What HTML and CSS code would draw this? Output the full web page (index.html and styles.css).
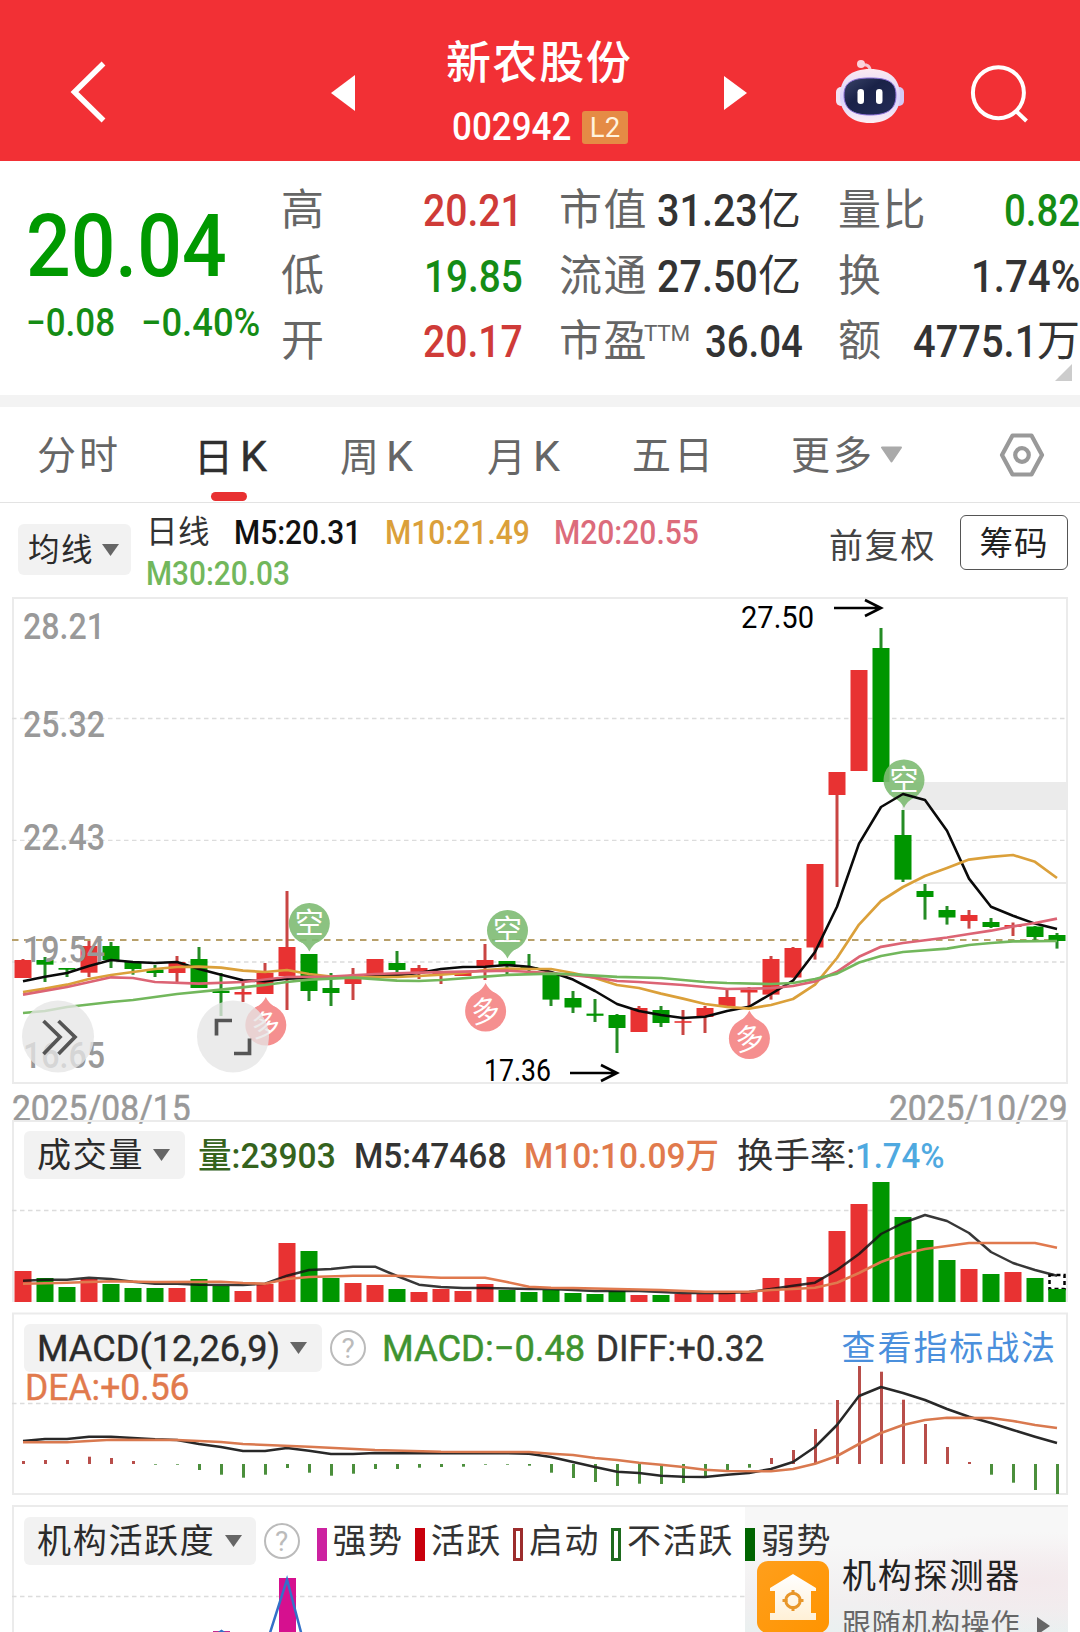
FILE: index.html
```html
<!DOCTYPE html>
<html lang="zh-CN">
<head>
<meta charset="utf-8">
<title>新农股份 002942</title>
<link rel="stylesheet" href="styles.css">
</head>
<body>
<header class="topbar">
  <svg class="back" width="36" height="62" viewBox="70 60 36 62"><path d="M103.500 62.500L74.500 91L103.500 119.500" fill="none" stroke="#fff" stroke-width="5.500"/></svg>
  <svg class="prev" width="24" height="36" viewBox="0 0 24 36"><path d="M0 18L24 0V36Z" fill="#fff"/></svg>
  <div class="stock">
    <div class="stock-name">新农股份</div>
    <div class="stock-code"><span class="fit" data-w="119">002942</span><span class="badge">L2</span></div>
  </div>
  <svg class="next" width="23" height="34" viewBox="0 0 23 34"><path d="M23 17L0 0V34Z" fill="#fff"/></svg>
  <svg class="robot" width="70" height="66" viewBox="835 58 70 66">
    <defs>
      <linearGradient id="shell" x1="0" y1="0" x2="0" y2="1"><stop offset="0" stop-color="#fbe9f1"/><stop offset=".55" stop-color="#d9d3fb"/><stop offset="1" stop-color="#fdeef4"/></linearGradient>
      <linearGradient id="visor" x1="0" y1="0" x2="1" y2="1"><stop offset="0" stop-color="#3a4468"/><stop offset=".4" stop-color="#1a2248"/><stop offset="1" stop-color="#232c56"/></linearGradient>
    </defs>
    <path d="M861 64Q870 62 870.500 71" fill="none" stroke="#f6c6d2" stroke-width="3"/>
    <circle cx="861" cy="63" r="4" fill="#fbd3dc"/>
    <rect x="836" y="86" width="10" height="19" rx="5" fill="#f3e2f3"/>
    <rect x="894" y="86" width="10" height="19" rx="5" fill="#d4c9f5"/>
    <path d="M870 68C889 68 900 77 900 95C900 112 888 122 870 122C852 122 840 112 840 95C840 77 851 68 870 68Z" fill="url(#shell)"/>
    <path d="M870 77C888 77 896 81 896 94C896 108 888 114 870 114C853 114 844 108 844 94C844 81 853 77 870 77Z" fill="url(#visor)" stroke="#8b6fd8" stroke-width="1"/>
    <rect x="857.500" y="88" width="6.500" height="15" rx="3.200" fill="#fff"/><rect x="876" y="88" width="6.500" height="15" rx="3.200" fill="#fff"/>
  </svg>
  <svg class="search" width="60" height="60" viewBox="968 63 60 60" fill="none" stroke="#fff" stroke-width="4"><circle cx="997.400" cy="91.700" r="25.500"/><path d="M1015 110L1025.500 120"/></svg>
</header>

<section class="quote">
  <div class="last">
    <div class="price"><span class="fit" data-w="201">20.04</span></div>
    <div class="change"><span class="fit" data-w="89">−0.08</span><span class="fit" data-w="119">−0.40%</span></div>
  </div>
  <dl class="col col-a">
    <div><dt>高</dt><dd class="up"><span class="fit" data-w="100">20.21</span></dd></div>
    <div><dt>低</dt><dd class="down"><span class="fit" data-w="99">19.85</span></dd></div>
    <div><dt>开</dt><dd class="up"><span class="fit" data-w="100">20.17</span></dd></div>
  </dl>
  <dl class="col col-b">
    <div><dt>市值</dt><dd><span class="fit" data-w="101">31.23</span><i>亿</i></dd></div>
    <div><dt>流通</dt><dd><span class="fit" data-w="101">27.50</span><i>亿</i></dd></div>
    <div><dt>市盈<sup>TTM</sup></dt><dd><span class="fit pe" data-w="98">36.04</span></dd></div>
  </dl>
  <dl class="col col-c">
    <div><dt>量比</dt><dd class="down"><span class="fit" data-w="76">0.82</span></dd></div>
    <div><dt>换</dt><dd><span class="fit" data-w="109">1.74%</span></dd></div>
    <div><dt>额</dt><dd><span class="fit" data-w="124">4775.1</span><i>万</i></dd></div>
  </dl>
  <span class="expand"></span>
</section>

<nav class="tabs">
  <span class="tab t1">分时</span>
  <span class="tab t2 active">日<b>K</b></span>
  <span class="tab t3">周<b>K</b></span>
  <span class="tab t4">月<b>K</b></span>
  <span class="tab t5">五日</span>
  <span class="tab t6">更多</span>
  <svg class="more" width="21" height="17" viewBox="0 0 21 17"><path d="M1 1.500H20L10.500 15.500Z" fill="#aaa" stroke="#aaa" stroke-width="2" stroke-linejoin="round"/></svg>
  <svg class="gear" width="46" height="44" viewBox="0 0 46 44" fill="none" stroke="#999"><path d="M13.500 2.500H32.500L43 22L32.500 41.500H13.500L3 22Z" stroke-width="4.200" stroke-linejoin="round"/><circle cx="23" cy="22" r="6.800" stroke-width="4.200"/></svg>
</nav>

<section class="ma">
  <span class="chip chip-ma"><em>均线</em><svg width="17" height="12" viewBox="0 0 17 12"><path d="M0 0H17L8.500 12Z"/></svg></span>
  <div class="ma-list">
    <span class="cjk">日线</span><span class="fit c5" data-w="127">M5:20.31</span><span class="fit c10" data-w="145">M10:21.49</span><span class="fit c20" data-w="145">M20:20.55</span><span class="fit c30" data-w="144">M30:20.03</span>
  </div>
  <span class="adjust">前复权</span>
  <span class="chips-btn">筹码</span>
</section>

<svg class="chart" id="kline" width="1080" height="487" viewBox="0 597 1080 487"></svg>
<div class="dates"><span class="fit" data-w="179">2025/08/15</span><span class="fit" data-w="179">2025/10/29</span></div>

<section class="panel panel-vol">
  <svg class="plot" id="vol" width="1080" height="182" viewBox="0 1120 1080 182"></svg>
  <div class="legend">
    <span class="chip"><em>成交量</em><svg width="17" height="12" viewBox="0 0 17 12"><path d="M0 0H17L8.500 12Z"/></svg></span>
    <div class="vals">
      <span class="fit vol" data-w="138">量:23903</span><span class="fit" data-w="152">M5:47468</span><span class="fit orange" data-w="195">M10:10.09万</span><span class="turn"><span class="fit thin" data-w="118">换手率:</span><span class="fit blue" data-w="90">1.74%</span></span>
    </div>
  </div>
</section>

<section class="panel panel-macd">
  <svg class="plot" id="macd" width="1080" height="183" viewBox="0 1312 1080 183"></svg>
  <div class="legend">
    <span class="chip"><span class="fit" data-w="243">MACD(12,26,9)</span><svg width="17" height="12" viewBox="0 0 17 12"><path d="M0 0H17L8.500 12Z"/></svg></span>
    <span class="help">?</span>
    <span class="fit macd-val" data-w="203">MACD:−0.48</span><span class="fit diff-val" data-w="168">DIFF:+0.32</span>
    <span class="link">查看指标战法</span>
  </div>
  <div class="dea"><span class="fit orange" data-w="165">DEA:+0.56</span></div>
</section>

<section class="panel panel-inst">
  <svg class="plot" id="inst" width="1080" height="127" viewBox="0 1505 1080 127"></svg>
  <aside class="promo">
    <svg width="72" height="72" viewBox="0 0 72 72">
      <defs><linearGradient id="or" x1="0" y1="0" x2="1" y2="1"><stop offset="0" stop-color="#ff9f1c"/><stop offset="1" stop-color="#ff9400"/></linearGradient>
      <linearGradient id="hs" x1="0" y1="0" x2="0" y2="1"><stop offset="0" stop-color="#fff"/><stop offset="1" stop-color="#fff0d6"/></linearGradient></defs>
      <rect width="72" height="72" rx="11" fill="url(#or)"/>
      <path d="M36 13L59 27V30H54V52H59V59H13V52H18V30H13V27Z" fill="url(#hs)"/>
      <circle cx="36" cy="39.500" r="7.200" fill="none" stroke="#e8962a" stroke-width="3"/><path d="M36 29V34M36 45V50M25.500 39.500H30.500M41.500 39.500H46.500" stroke="#e8962a" stroke-width="3"/>
    </svg>
    <div class="promo-text"><div class="promo-title">机构探测器</div><div class="promo-sub">跟随机构操作<svg width="13" height="18" viewBox="0 0 13 18"><path d="M0 0L13 9L0 18Z" fill="#666"/></svg></div></div>
  </aside>
  <div class="legend">
    <span class="chip"><em>机构活跃度</em><svg width="17" height="12" viewBox="0 0 17 12"><path d="M0 0H17L8.500 12Z"/></svg></span>
    <span class="help">?</span>
    <ul class="keys">
      <li><i class="k1"></i>强势</li><li><i class="k2"></i>活跃</li><li><i class="k3"></i>启动</li><li><i class="k4"></i>不活跃</li><li><i class="k5"></i>弱势</li>
    </ul>
  </div>
</section>
<script src="charts.js"></script>
</body>
</html>
```
FILE: styles.css
```css
* { box-sizing: border-box; margin: 0; padding: 0; }
html, body { width: 1080px; height: 1632px; overflow: hidden; background: #fff; }
body { font-family: Roboto, "Noto Sans CJK SC", sans-serif; color: #333; }
i, em { font-style: normal; }
svg { display: block; flex: none; }
.fit { display: inline-block; white-space: nowrap; flex: none; text-align: left; }
.fit > span { display: inline-block; transform-origin: 0 50%; }

/* title bar */
.topbar { display: flex; align-items: center; height: 161px; padding-top: 22px; background: #f23035; color: #fff; }
.back { margin-left: 70px; }
.prev { margin: 3px 0 0 225px; }
.stock { align-self: stretch; width: 200px; margin-left: 84px; padding-top: 16px; }
.stock-name { font-size: 45px; font-weight: 500; line-height: 52px; letter-spacing: 1.600px; padding-left: 7px; white-space: nowrap; }
.stock-code { display: flex; align-items: center; height: 34px; margin-top: 20px; padding-left: 13px; font-size: 38.500px; font-weight: 500; line-height: 38px; }
.badge { width: 46px; height: 33px; margin-left: 11px; border-radius: 3px; background: #e58b45; color: #fff3df; font-size: 27.500px; font-weight: 400; line-height: 33px; text-align: center; }
.next { margin: 3px 0 0 85px; }
.robot { margin-left: 88px; }
.search { margin: 5px 0 0 64px; }

/* quote */
.quote { position: relative; display: flex; height: 234px; }
.last { width: 256px; margin-left: 26px; padding-top: 39px; color: #009900; }
.price { font-size: 88px; line-height: 92px; height: 90px; font-weight: 500; }
.change { display: flex; justify-content: space-between; width: 234px; margin-top: 13px; font-size: 38.500px; line-height: 40px; font-weight: 500; color: #158c15; }
.col { padding-top: 17px; }
.col > div { display: flex; justify-content: space-between; height: 65.600px; line-height: 65.600px; white-space: nowrap; }
.col-a { width: 242px; margin-right: 36px; margin-left: -1px; }
.col-b { width: 242px; margin-right: 37px; }
.col-c { width: 242px; }
.col dt { font-size: 43px; letter-spacing: 1.500px; color: #666; }
.col dd { display: flex; font-size: 45px; font-weight: 500; color: #333; }
.col dd i { font-size: 43px; font-weight: 400; }
.col dd .pe { margin-right: -2px; }
.col .up { color: #cf3b38; }
.col .down { color: #158c15; }
.col sup { position: relative; top: -15px; margin-left: -4px; font-size: 22.500px; line-height: 1px; letter-spacing: -.300px; vertical-align: baseline; }
.expand { position: absolute; right: 8px; bottom: 14px; border-left: 17px solid transparent; border-bottom: 17px solid #ccc; }

/* period tabs */
.tabs { display: flex; align-items: center; height: 108px; border-top: 12px solid #f3f3f3; border-bottom: 1px solid #e3e3e3; color: #666; }
.tab { position: relative; height: 95px; width: 84px; font-size: 39px; line-height: 98px; letter-spacing: 3px; white-space: nowrap; }
.tab b { margin-left: 4px; font-size: 43px; font-weight: 400; }
.tab.active { color: #2f2f2f; -webkit-text-stroke: .400px #2f2f2f; }
.tab.active::after { content: ""; position: absolute; left: 17px; bottom: 1px; width: 36px; height: 9px; border-radius: 5px; background: #e83031; }
.t1 { margin-left: 37px; }
.t2 { margin-left: 73px; }
.t3 { margin-left: 62px; }
.t4 { margin-left: 63px; }
.t5 { margin-left: 61px; }
.t6 { margin-left: 75px; }
.more { margin: -1px 0 0 6px; }
.gear { margin: 0 0 0 97px; }

/* moving averages */
.ma { display: flex; height: 94px; }
.chip { display: flex; align-items: center; height: 48px; padding: 0 14px 0 13px; border-radius: 6px; background: #f2f2f2; font-size: 34px; letter-spacing: 1.700px; color: #2b2b2b; white-space: nowrap; flex: none; }
.chip em, .keys li, .link { height: 48px; line-height: 49px; }
.chip svg { margin-left: 9px; fill: #666; }
.chip-ma { width: 113px; height: 51px; margin: 21px 0 0 18px; padding: 0 0 0 10px; font-size: 31.500px; letter-spacing: 1.500px; }
.chip-ma svg { margin-left: 8px; }
.ma-list { display: flex; flex-wrap: wrap; column-gap: 24px; align-content: flex-start; width: 600px; margin: 10px 0 0 15px; font-size: 32.500px; line-height: 40.500px; font-weight: 500; }
.ma-list .cjk { width: 64px; font-size: 31.500px; font-weight: 400; letter-spacing: .500px; }
.c5 { color: #111; }
.c10 { color: #dba03a; }
.c20 { color: #dc6b7b; }
.c30 { color: #72b75c; }
.adjust { width: 130px; margin-left: 83px; font-size: 34px; letter-spacing: 1.800px; line-height: 87px; color: #444; }
.chips-btn { width: 108px; height: 55px; margin-top: 12px; margin-left: 1px; border: 1px solid #555; border-radius: 6px; font-size: 33.500px; line-height: 56px; text-align: center; letter-spacing: 1px; color: #222; }

.chart { overflow: visible; }
.dates { display: flex; justify-content: space-between; height: 36px; padding: 6px 12px 0; font-size: 36px; line-height: 39px; color: #999; -webkit-text-stroke: .500px #999; }

/* indicator panels */
.panel { position: relative; }
.plot { position: absolute; left: 0; top: 0; }
.panel-vol { height: 182px; margin-bottom: 10px; }
.panel-macd { height: 183px; margin-bottom: 10px; }
.panel-inst { height: 127px; overflow: hidden; }
.legend { position: relative; display: flex; align-items: center; padding: 12px 12px 0 24px; white-space: nowrap; }
.panel-vol .legend { padding-top: 11px; }
.panel-vol .chip { width: 161px; }
.vals { display: flex; gap: 18px; height: 48px; margin-left: 13px; font-size: 35.500px; line-height: 50px; font-weight: 500; }
.turn { display: flex; }
.thin { font-weight: 400; }
.vol { color: #35631d; }
.orange { color: #e17a4d; }
.blue { color: #4fa9e0; }
.panel-macd .chip { width: 298px; font-size: 37px; letter-spacing: 0; -webkit-text-stroke: .400px #2b2b2b; }
.panel-macd .chip svg { margin-left: 10px; }
.help { width: 36px; height: 36px; margin-left: 8px; border: 2px solid #bbb; border-radius: 50%; font-size: 28px; line-height: 33px; text-align: center; color: #bbb; flex: none; }
.macd-val { margin-left: 16px; font-size: 37px; color: #3f9330; -webkit-text-stroke: .500px #3f9330; }
.diff-val { margin-left: 11px; font-size: 37px; -webkit-text-stroke: .400px #333; }
.link { margin: 0 11px 0 auto; font-size: 34px; letter-spacing: 1.900px; color: #4a8fdc; }
.dea { position: relative; padding-left: 25px; font-size: 37px; line-height: 32px; -webkit-text-stroke: .400px #e17a4d; }
.keys { display: flex; gap: 11px; margin-left: 17px; list-style: none; font-size: 34px; letter-spacing: 1.600px; }
.keys li { display: flex; }
.keys i { width: 10px; height: 33px; margin: 11px 6px 0 0; }
.k1 { background: #cc22a0; }
.k2 { background: #c8000c; }
.k3 { border: 3px solid #9c2d2d; }
.k4 { border: 3px solid #1e6b1e; }
.k5 { background: #006400; }
.promo { position: absolute; right: 12px; top: 0; width: 323px; height: 127px; display: flex; padding: 56px 0 0 12px; border-top: 2px solid #ebebeb; background: radial-gradient(ellipse 190px 50px at 90% 60%, #f3e9ec, rgba(243,233,236,0)), linear-gradient(#f7f7f7 30%, #f1eff0 75%, #eaf0f0); }
.promo svg { margin-top: -2px; }
.promo-text { margin-left: 13px; white-space: nowrap; }
.promo-title { margin-top: -4px; font-size: 34px; letter-spacing: 1.800px; line-height: 34px; color: #222; }
.promo-sub { display: flex; align-items: center; margin-top: 15px; font-size: 29px; letter-spacing: .700px; line-height: 34px; color: #666; }
.promo-sub svg { margin: 2px 0 0 17px; }
```
FILE: charts.js
```js
// Condenses each figure to the width of its slot.
document.querySelectorAll('.fit').forEach(function (el) {
  var inner = document.createElement('span');
  inner.textContent = el.textContent;
  el.textContent = '';
  el.appendChild(inner);
  el.style.width = el.dataset.w + 'px';
  inner.style.transform = 'scaleX(' + el.dataset.w / inner.offsetWidth + ')';
});

var RED = '#e83232', GREEN = '#009600';
function X(i) { return 23 + 22 * i; }
function rect(x, y, w, h, f, extra) { return '<rect x="' + x + '" y="' + y + '" width="' + w + '" height="' + h + '" fill="' + f + '" ' + (extra || '') + '/>'; }
function seg(x1, y1, x2, y2, c, w, dash) { return '<path d="M' + x1 + ' ' + y1 + 'L' + x2 + ' ' + y2 + '" stroke="' + c + '" stroke-width="' + w + '"' + (dash ? ' stroke-dasharray="' + dash + '"' : '') + ' fill="none"/>'; }
// pts is a flat list of index, y
function line(pts, c, w) {
  var s = '';
  for (var i = 0; i < pts.length; i += 2) s += X(pts[i]) + ',' + pts[i + 1] + ' ';
  return '<polyline points="' + s + '" fill="none" stroke="' + c + '" stroke-width="' + w + '" stroke-linejoin="round"/>';
}
function txt(x, y, t, size, fill, w, extra) { return '<text x="' + x + '" y="' + y + '" font-size="' + size + '" fill="' + fill + '"' + (w ? ' textLength="' + w + '" lengthAdjust="spacingAndGlyphs"' : '') + ' ' + (extra || '') + '>' + t + '</text>'; }
function grid(y, x2) { return seg(12, y, x2 || 1066, y, '#dcdcdc', 1.3, '4.5 3.5'); }

// colour, body top, body bottom, high, low
var K = [
['R',960,978,959,978],['G',960,964.7,957,982],['G',968,969.7,968,977],['R',946,972.7,941,977],['G',946,960,942,968],['G',962,969,962,974.7],
['G',969.5,973,965,977],['R',962,973,956,982],['G',959,988,947,988],['G',990.7,993,973,1016],['R',992,994.5,982,1002],['R',972.7,994,963,994],
['R',947,976,891,1010],['G',954,991,954,1001],['G',988,993,973,1006],['R',979,984,968,1000],['R',959,974,959,974],['G',963,970,951,975],
['R',968,973,965,979],['R',973,975,973,984],['R',972,976,972,976],['R',960,966,944,980],['G',961,965,961,975],['G',967,969.5,954,975],
['G',973.6,999.6,973,1006],['G',998,1007.5,991,1013],['G',1013.6,1015.8,999,1022],['G',1015,1028,1014,1053],['R',1008,1032,1006,1032],['G',1010,1023,1006,1027],
['R',1021.2,1022.8,1010,1035],['R',1008,1017,1006,1033],['R',997,1006.5,989.6,1006.5],['R',990,992.5,987,1007],['R',959,994.6,956,999.6],['R',948,977.5,947,977.5],
['R',864,947.5,864,959.6],['R',772,795,772,887],['R',670,771,670,771],['G',648,782,628,782],['G',835,879.6,810,882],['G',891,897,884,919.6],
['G',910,917.5,906,924.6],['R',915,921,910,928.6],['G',922,927,918,928],['R',925,927,922.5,936],['G',926.5,937,926,940],['G',935,941,933,948.6]];

function pin(x, y, green) {
  var c = green ? '#7fbc74' : '#f58383', t = green ? y + 28 : y - 28, s = green ? 1 : -1;
  return '<g opacity=".9"><path d="M' + (x - 11) + ' ' + (y + s * 17) + 'Q' + (x - 3) + ' ' + (y + s * 21) + ' ' + x + ' ' + t + 'Q' + (x + 3) + ' ' + (y + s * 21) + ' ' + (x + 11) + ' ' + (y + s * 17) + 'Z" fill="' + c + '"/><circle cx="' + x + '" cy="' + y + '" r="20.5" fill="' + c + '"/>' +
    txt(x, y + 10.5, green ? '空' : '多', 29, '#fff', 0, 'text-anchor="middle"' + (green ? '' : ' transform="rotate(-10 ' + x + ' ' + y + ')"')) + '</g>';
}

var s = rect(902, 782, 166, 28, '#ebebeb') + seg(915, 883, 1068, 883, '#e3e3e3', 1.5);
s += '<rect x="13" y="598" width="1054" height="485" fill="none" stroke="#ebebeb" stroke-width="2"/>';
s += grid(718.5) + grid(840.4) + grid(962) + seg(12, 940, 1066, 940, '#b8a06a', 1.8, '6.5 5.5');
K.forEach(function (k, i) {
  var c = k[0] === 'R' ? RED : GREEN;
  s += rect(X(i) - 1.5, k[3], 3, k[4] - k[3], k[0] === 'R' ? '#c94543' : '#258c25') + rect(X(i) - 8.5, k[1], 17, k[2] - k[1], c);
});
s += pin(309.3, 923.5, 1) + pin(507.5, 930.5, 1) + pin(904, 780, 1) + pin(265.8, 1025, 0) + pin(485.6, 1011, 0) + pin(749.4, 1038.6, 0);
s += line([0,981.3,1,976.7,2,973,3,966,4,960,5,962,6,963,7,962,8,969,9,974.7,10,980.3,11,981.3,12,978.7,13,977.7,14,977,15,976,16,974.7,17,975.3,18,973,19,969,20,967,21,966.7,22,965,23,966.7,24,972,25,979.6,26,991,27,1004,28,1011,29,1015,30,1018,31,1016.8,32,1011,33,1006.8,34,994,35,980.7,36,952,37,906.8,38,843.6,39,807,40,794,41,800,42,830.7,43,878.6,44,906.8,45,915.7,46,923.6,47,929], '#0a0a0a', 2.6);
s += line([0,992,1,988.7,2,984.7,3,979,4,975,5,972,6,969,7,967,8,966.7,9,967.7,10,970.7,11,972,12,970,13,974,14,976.7,16,977,17,977,18,976,19,974.7,20,973,21,970,22,968.7,23,969,24,969,25,973,26,978,27,985,28,988,29,993.6,30,998.6,31,1004,32,1006.8,33,1008.6,34,1005,35,999,36,984.6,37,958,38,924.6,39,901,40,887,41,876,42,868,43,859.6,44,856.8,45,855,46,861.8,47,878], '#dba03a', 2.7);
s += line([0,994.7,2,987,4,977.3,5,978,6,982,8,983.7,10,982,12,977,14,976.7,16,974,18,972.7,20,971.7,22,970.7,24,973,26,977.5,27,981,28,982,30,985,32,989,34,988.2,35,986,36,981.4,37,971.8,38,956.8,39,946.8,40,943,42,937.5,43,934,44,930.7,45,926.4,46,923,47,918.6], '#dc6474', 2.7);
s += line([0,1013,1,1011,2,1007,4,1002,5,1000,7,994,9,989.7,11,985,12,982,13,979.7,15,977.7,17,980.7,18,981,19,980,21,976.7,22,975,24,973.6,25,974.3,27,976.8,29,978,31,982,32,983,34,984,35,983,36,979,37,973.6,38,962.5,39,956,40,952,42,948.6,43,945,44,943,45,941.4,47,941], '#72b75c', 2.7);
[['28.21', 639], ['25.32', 736.5], ['22.43', 849.5], ['19.54', 962], ['16.65', 1067.5]].forEach(function (l) { s += txt(23, l[1], l[0], 36, '#999', 82, 'font-weight="500"'); });
s += txt(741, 628, '27.50', 31.5, '#000', 73) + txt(484, 1081, '17.36', 31.5, '#000', 67);
s += '<path d="M834 608H881M865 600L881 608L865 616M570 1073H617M601 1065L617 1073L601 1081" fill="none" stroke="#000" stroke-width="2.6"/>';
s += '<circle cx="58" cy="1036.500" r="36" fill="#e6e6e6" fill-opacity=".78"/><circle cx="233" cy="1036.500" r="36" fill="#e6e6e6" fill-opacity=".78"/>';
s += '<path d="M43.500 1021L60 1037L43.500 1054M58.500 1021L75 1037L58.500 1054M232 1020.500H216.500V1035.500M234 1053.500H249.500V1038.500" fill="none" stroke="#555" stroke-width="3.700"/>';
document.getElementById('kline').innerHTML = s;

// volume bar tops, same order as the candles
var V = [1271,1278,1287,1279,1284,1288,1288,1288,1279,1286,1291,1284,1243,1251,1278,1283,1285,1289,1292,1289,1291,1284,1290,1292,1290,1293,1294,1291,1295,1295,1294,1294,1293,1292,1278,1278,1277,1231,1204,1182,1217,1240,1260,1269,1274,1272,1278,1289];
s = '<path d="M13 1302V1121H1067V1302" fill="none" stroke="#ebebeb" stroke-width="2"/>' + grid(1210.5) + seg(12, 1301, 1068, 1301, '#ededed', 1);
V.forEach(function (y, i) { s += rect(X(i) - 8.5, y, 17, 1302 - y, K[i][0] === 'R' ? RED : GREEN); });
s += rect(1049.5, 1275, 15, 14, '#fff', 'stroke="#000" stroke-width="2.5" stroke-dasharray="4 3"');
s += rect(1048.5, 1289, 17, 13, GREEN);
s += line([0,1280.7,1,1279.7,2,1279.7,3,1277.7,4,1279,5,1281.7,6,1283.7,7,1283.7,8,1284.7,10,1285,11,1283.7,12,1275.7,13,1270,14,1269,15,1266.7,16,1266.7,17,1276,18,1284.7,19,1287,20,1288,21,1288,23,1289,24,1289,25,1290,26,1291,28,1291,30,1293,32,1293,33,1292,34,1289,35,1285.7,36,1282.7,37,1270,38,1254,39,1234,40,1223,41,1215,42,1221,43,1233,44,1252,45,1263,46,1270,47,1275.7], 'rgba(20,20,20,.85)', 2.5);
s += line([0,1283.7,2,1282.7,4,1281.3,6,1282,9,1281.7,10,1283,11,1283.7,12,1279,13,1277,15,1275.7,17,1275.7,19,1277.7,21,1277.7,22,1282,23,1286.7,24,1287.7,25,1288,29,1290,31,1291.7,33,1291.7,34,1290,35,1289,36,1287.7,37,1282.7,38,1273,39,1262,40,1254,41,1249,42,1246,43,1243,46,1243,47,1247.7], '#e0794e', 2.6);
document.getElementById('vol').innerHTML = s;

// MACD histogram ends
var M = [1461,1460,1460,1456.7,1458,1461,1464.7,1464.7,1470,1474.7,1477.7,1474.7,1468,1472.7,1475.7,1473.7,1469,1469,1467.7,1467,1466.7,1464.7,1464.7,1465.7,1472.7,1478,1482,1486,1483.7,1484,1483,1477.7,1472,1467.7,1458,1450,1429,1400,1366,1371.7,1399.7,1424,1447,1462,1474.7,1482.7,1490,1494];
s = '<rect x="13" y="1313.500" width="1054" height="180.500" fill="none" stroke="#ebebeb" stroke-width="2"/>' + grid(1403.5);
M.forEach(function (y, i) { s += y < 1464 ? rect(X(i) - 1, y, 3, 1464 - y, '#b84e4a') : rect(X(i) - 1, 1464, 3, y - 1464, '#4b8f3c'); });
s += line([0,1441,1,1439,2,1439,3,1436.7,4,1436.7,5,1438,6,1439.3,7,1440,8,1444,9,1447,10,1451,11,1451,12,1448,13,1450.7,14,1454,15,1454,16,1453,22,1453.3,23,1453.7,24,1457,25,1462,26,1467,27,1471.7,28,1473,29,1475.7,30,1476.7,31,1477,32,1474.7,33,1473,34,1469,35,1462,36,1447,37,1425,38,1396,39,1387,40,1393,41,1400,42,1409,43,1416.7,44,1423,45,1430,46,1436.7,47,1443], '#282828', 2.5);
s += line([0,1442.3,2,1442.3,4,1439.7,7,1440,9,1442,10,1444,13,1446.7,16,1450,19,1451.7,23,1452,24,1453.7,25,1455,26,1458,27,1460,28,1462.7,29,1464.7,30,1467,31,1469.7,32,1471,34,1471.3,35,1469,36,1463.7,37,1456,38,1444,39,1433,40,1425,41,1420,42,1417.7,44,1418,45,1421,46,1425,47,1428], '#d9794f', 2.6);
document.getElementById('macd').innerHTML = s;

s = '<path d="M13 1632V1506H1067V1632" fill="none" stroke="#ebebeb" stroke-width="2"/>' + grid(1596.5, 745);
s += rect(279, 1578, 17, 54, '#d6108f') + rect(213, 1631, 17, 1, '#c02a90');
s += '<path d="M269 1636L287 1579.500L302 1636M217 1634L221.500 1631L226 1634" fill="none" stroke="#3470c8" stroke-width="2.500"/>';
document.getElementById('inst').innerHTML = s;
```
